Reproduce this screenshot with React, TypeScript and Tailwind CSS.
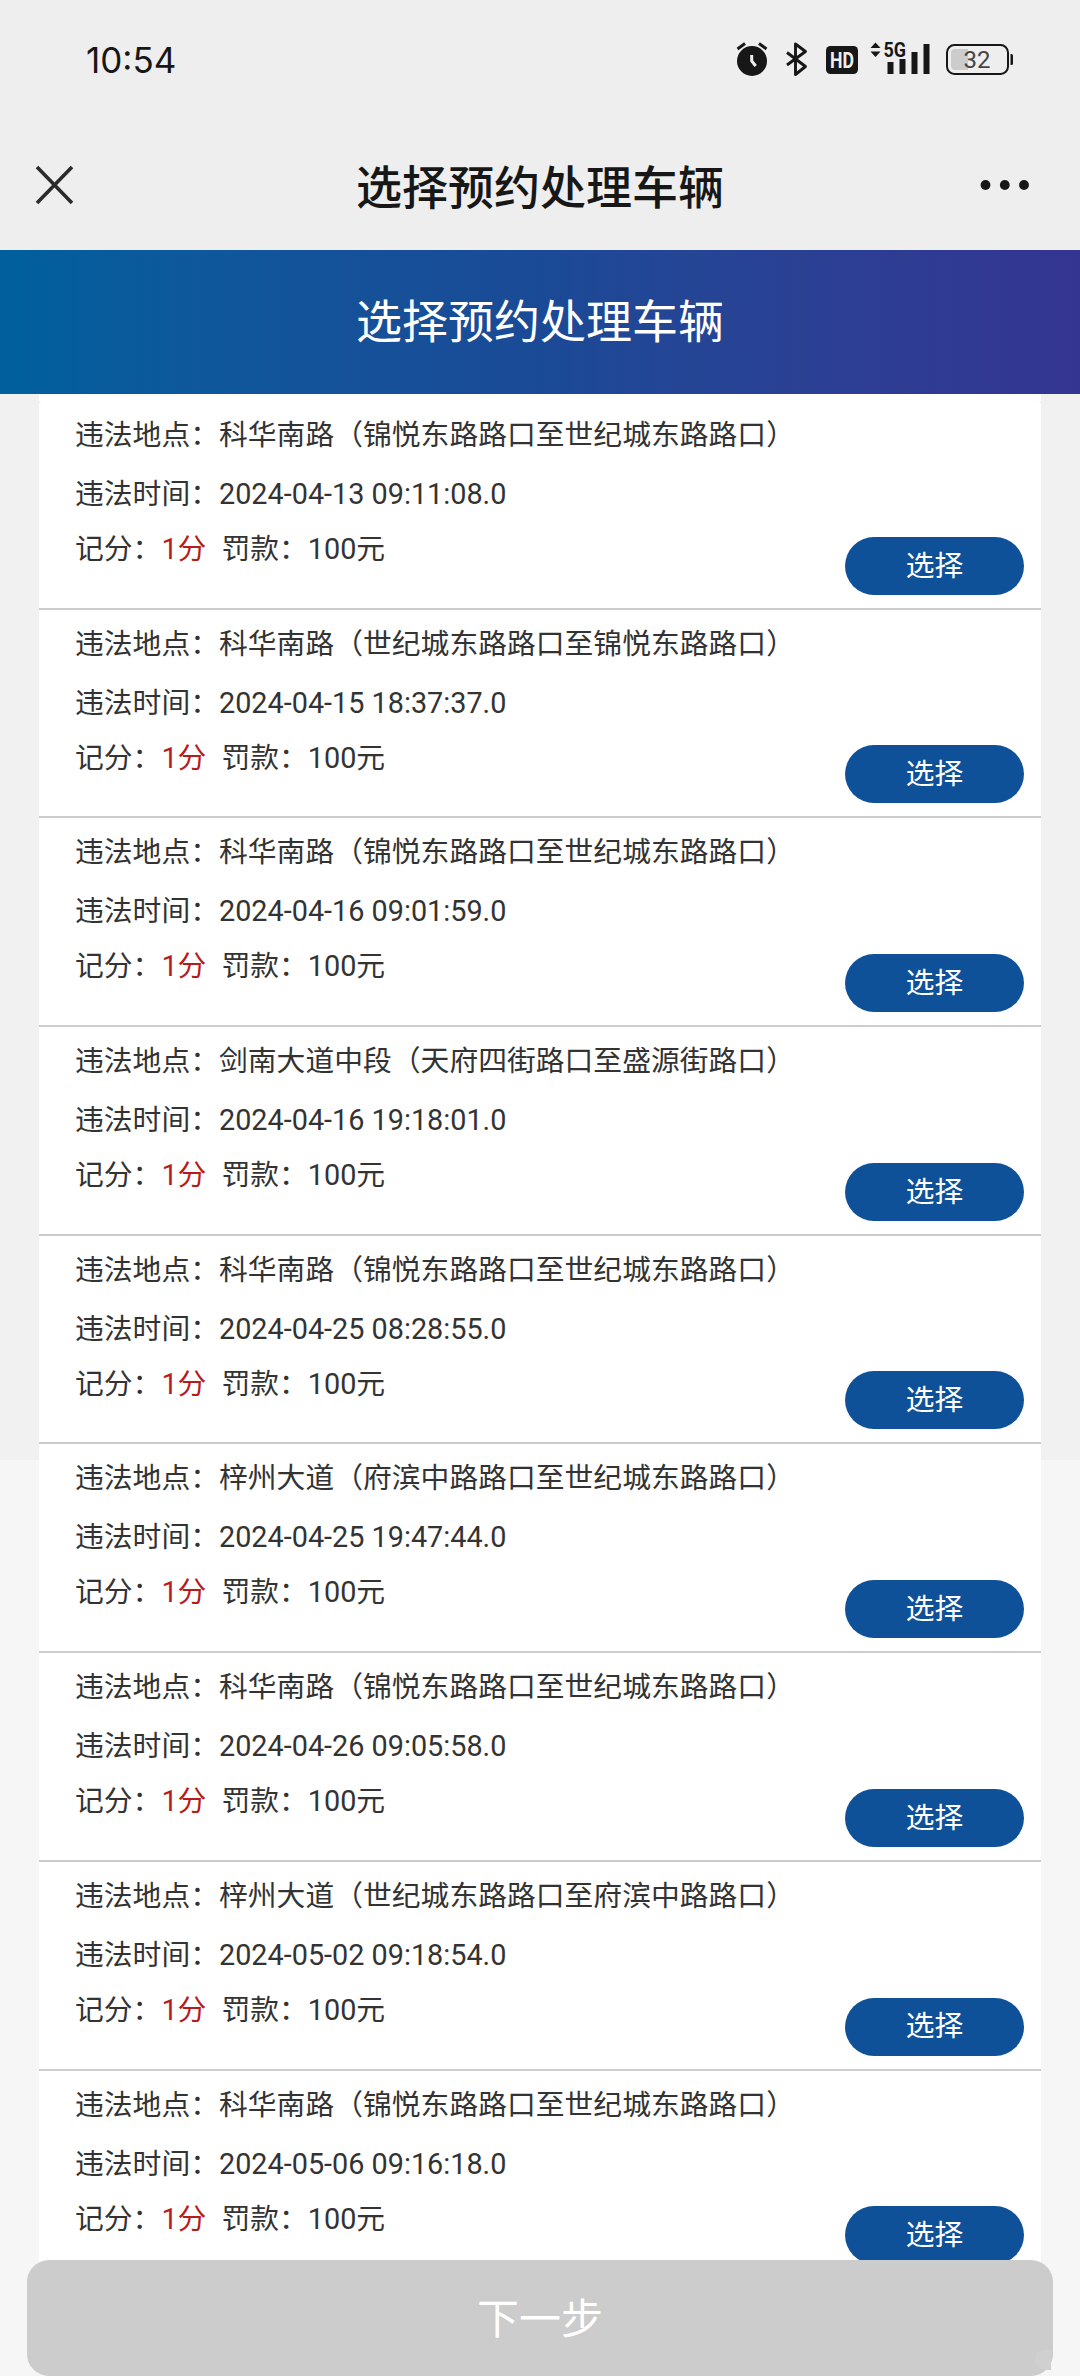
interface Violation {
  place: string
  time: string
}

const violations: Violation[] = [
  { place: "科华南路（锦悦东路路口至世纪城东路路口）", time: "2024-04-13 09:11:08.0" },
  { place: "科华南路（世纪城东路路口至锦悦东路路口）", time: "2024-04-15 18:37:37.0" },
  { place: "科华南路（锦悦东路路口至世纪城东路路口）", time: "2024-04-16 09:01:59.0" },
  { place: "剑南大道中段（天府四街路口至盛源街路口）", time: "2024-04-16 19:18:01.0" },
  { place: "科华南路（锦悦东路路口至世纪城东路路口）", time: "2024-04-25 08:28:55.0" },
  { place: "梓州大道（府滨中路路口至世纪城东路路口）", time: "2024-04-25 19:47:44.0" },
  { place: "科华南路（锦悦东路路口至世纪城东路路口）", time: "2024-04-26 09:05:58.0" },
  { place: "梓州大道（世纪城东路路口至府滨中路路口）", time: "2024-05-02 09:18:54.0" },
  { place: "科华南路（锦悦东路路口至世纪城东路路口）", time: "2024-05-06 09:16:18.0" },
]

function StatusIcons() {
  return (
    <svg width="284" height="60" viewBox="736 30 284 60" fill="none">
      {/* alarm */}
      <circle cx="752" cy="61" r="15" fill="#171717" />
      <path d="M737.5 49l7.5-5.5M766.5 49l-7.5-5.5" stroke="#171717" strokeWidth="3" />
      <path d="M751.7 55v6l4 5" stroke="#eee" strokeWidth="3" />
      {/* bluetooth */}
      <path
        d="M787 52.5l18.500 14-10 8V44l10 7.500L787 65"
        stroke="#171717"
        strokeWidth="2.9"
        strokeLinejoin="round"
      />
      <rect x="826" y="46" width="32" height="28" rx="4.5" fill="#171717" />
      <text x="842" y="67.5" textAnchor="middle" textLength="24" lengthAdjust="spacingAndGlyphs" className="fill-[#eee] font-['Roboto',sans-serif] text-[22px] font-bold">
        HD
      </text>
      {/* 5G signal */}
      <path d="M875.5 42.5l5 5.500h-10zM875.5 57l5-5.500h-10z" fill="#171717" />
      <text x="883.5" y="56.7" textLength="22.5" lengthAdjust="spacingAndGlyphs" className="fill-[#171717] font-['Roboto',sans-serif] text-[20.5px] font-bold">
        5G
      </text>
      <path d="M887.5 62h6v12h-6zM899.5 59h6v15h-6zM911.5 52h6v22h-6zM923.5 44h6v30h-6z" fill="#171717" />
      {/* battery */}
      <rect x="947" y="45" width="61" height="29" rx="7.5" stroke="#171717" strokeWidth="2" />
      <path d="M968 49h-13q-4 0-4 4v13q0 4 4 4h13z" fill="#ccc" />
      <path d="M1010.5 54h1q1.500 0 1.500 1.500v8q0 1.500-1.500 1.500h-1z" fill="#171717" />
      <text x="977" y="68" textAnchor="middle" className="fill-[#444] font-['Roboto',sans-serif] text-[24px]">
        32
      </text>
    </svg>
  )
}

function ViolationRow({ place, time }: Violation) {
  return (
    <li className="flex h-[208.7px] justify-between border-b-2 border-[#ccc] bg-white pt-1 pr-[17px] pl-9 first:rounded-t-[4px]">
      <div className="whitespace-nowrap">
        <p className="h-15 leading-[60px]">违法地点：{place}</p>
        <p className="h-[58px] leading-[58px]">违法时间：{time}</p>
        <p className="h-13 leading-[52px]">
          记分：<span className="text-[#b71c1c]">1分</span>
          <span className="ml-[15px]">罚款：100元</span>
        </p>
      </div>
      <button type="button" className="mb-[13px] h-[58px] w-[179px] shrink-0 self-end rounded-full bg-[#0f5199] pt-px text-white">
        选择
      </button>
    </li>
  )
}

export default function App() {
  return (
    <div className="relative h-[2376px] w-[1080px] overflow-hidden bg-[#f6f6f6] font-['Roboto','Noto_Sans_CJK_SC',sans-serif] text-[#333]">
      <header className="h-[250px] bg-[#eee] text-[#171717]">
        <div className="flex h-[120px] items-start justify-between pr-[60px] pl-[86px]">
          <span className="mt-[38px] font-['Inter',sans-serif] text-[35px] leading-[44px]">10:54</span>
          <div className="mt-[30px]">
            <StatusIcons />
          </div>
        </div>
        <div className="grid h-[130px] grid-cols-[1fr_auto_1fr] items-center pr-[50px] pb-[1px] pl-[35px]">
          <svg width="40" height="40" viewBox="0 0 40 40" stroke="#2b2b2b" strokeWidth="3.6">
            <path d="M2 2l35 36M37 2L2 38" />
          </svg>
          <h1 className="mt-1.5 ml-[15px] text-[46px] leading-[60px] font-medium">选择预约处理车辆</h1>
          <svg className="justify-self-end" width="50" height="12" viewBox="0 0 50 12" fill="#171717">
            <circle cx="5.5" cy="6" r="4.9" />
            <circle cx="24.8" cy="6" r="4.9" />
            <circle cx="44" cy="6" r="4.9" />
          </svg>
        </div>
      </header>

      <div className="flex h-36 items-center justify-center bg-linear-to-r from-[#005f9d] via-[#1a4a96] to-[#343591]">
        <h2 className="pb-px text-[46px] leading-[60px] text-white">选择预约处理车辆</h2>
      </div>

      <main className="h-[1066px] bg-[#f1f1f1] px-[39px]">
        <div className="h-[7px] bg-white" />
        <ul className="text-[28.8px]">
          {violations.map((item) => (
            <ViolationRow key={item.time} {...item} />
          ))}
        </ul>
      </main>

      <button
        type="button"
        disabled
        className="absolute bottom-0 left-[27px] flex h-29 w-[1026px] items-center justify-center rounded-[22px] bg-[#ccc] pt-0.5 text-[42px] text-white"
      >
        下一步
        <span className="absolute right-0.5 bottom-1.5 h-5 w-4 rounded-l-full bg-[#d0d0d0]" />
      </button>
    </div>
  )
}
